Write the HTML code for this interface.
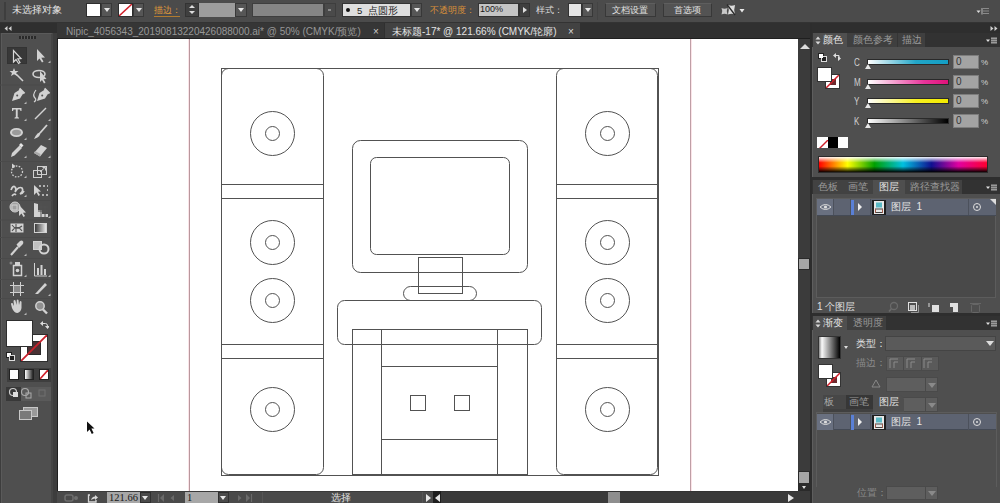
<!DOCTYPE html>
<html><head><meta charset="utf-8">
<style>
*{box-sizing:border-box;margin:0;padding:0}
html,body{width:1000px;height:503px;overflow:hidden;background:#535353;font-family:"Liberation Sans",sans-serif;}
.a{position:absolute}
.t{position:absolute;white-space:nowrap;line-height:1;}
.dd{position:absolute;background:#565656;border:1px solid #383838}
.dd:after{content:"";position:absolute;left:50%;top:50%;margin-left:-3px;margin-top:-2px;border-left:3px solid transparent;border-right:3px solid transparent;border-top:4px solid #e6e6e6}
</style></head><body>

<!-- top control bar -->
<div class="a" style="left:0;top:0;width:1000px;height:23px;background:#4b4b4b;border-bottom:1px solid #333"></div>

<div class="a" style="left:4px;top:2px;width:2px;height:18px;background:#3e3e3e"></div>
<div class="t" style="left:12px;top:5px;font-size:9.5px;color:#e4e4e4">未选择对象</div>

<div class="a" style="left:86px;top:3px;width:15px;height:14px;background:#fff;border:1px solid #2e2e2e"></div>
<div class="dd" style="left:101px;top:3px;width:11px;height:14px"></div>
<div class="a" style="left:118px;top:3px;width:15px;height:14px;background:#fff;border:1px solid #2e2e2e;overflow:hidden">
  <svg width="13" height="12" style="position:absolute;left:0;top:0"><line x1="0" y1="12" x2="13" y2="0" stroke="#d0202a" stroke-width="1.5"/></svg></div>
<div class="dd" style="left:133px;top:3px;width:11px;height:14px"></div>
<div class="t" style="left:154px;top:5.5px;font-size:9px;color:#e09a3c;font-weight:normal">描边：</div>
<div class="a" style="left:154px;top:16px;width:26px;height:1px;background:#b07a30"></div>
<div class="a" style="left:185px;top:3px;width:14px;height:14px;background:#3f3f3f;border:1px solid #333"></div>
<div class="a" style="left:189px;top:5px;width:0;height:0;border-left:3px solid transparent;border-right:3px solid transparent;border-bottom:3px solid #ddd"></div>
<div class="a" style="left:189px;top:11px;width:0;height:0;border-left:3px solid transparent;border-right:3px solid transparent;border-top:3px solid #ddd"></div>
<div class="a" style="left:199px;top:3px;width:36px;height:14px;background:#9c9c9c"></div>
<div class="dd" style="left:235px;top:3px;width:12px;height:14px"></div>
<div class="a" style="left:252px;top:3px;width:72px;height:14px;background:#858585;border:1px solid #3e3e3e"></div>
<div class="a" style="left:324px;top:3px;width:12px;height:14px;background:#4a4a4a;border:1px solid #3e3e3e"></div>
<div class="a" style="left:328px;top:9px;width:3px;height:2px;background:#888"></div>
<div class="a" style="left:342px;top:3px;width:69px;height:14px;background:#dedede;border:1px solid #333"></div>
<div class="a" style="left:346px;top:8px;width:4px;height:4px;border-radius:50%;background:#111"></div>
<div class="t" style="left:357px;top:5.5px;font-size:9.5px;color:#222">5&nbsp;&nbsp;点圆形</div>
<div class="dd" style="left:411px;top:3px;width:11px;height:14px"></div>
<div class="t" style="left:430px;top:5.5px;font-size:9px;color:#d8903a;font-weight:normal">不透明度：</div>
<div class="a" style="left:478px;top:3px;width:41px;height:14px;background:#c4c4c4;border:1px solid #333"></div>
<div class="t" style="left:480px;top:5px;font-size:9px;color:#1a1a1a">100%</div>
<div class="a" style="left:519px;top:3px;width:11px;height:14px;background:#3f3f3f;border:1px solid #333"></div>
<div class="a" style="left:523px;top:7px;border-top:3px solid transparent;border-bottom:3px solid transparent;border-left:4px solid #ddd"></div>
<div class="t" style="left:536px;top:5.5px;font-size:9px;color:#dcdcdc;font-weight:normal">样式：</div>
<div class="a" style="left:568px;top:3px;width:14px;height:14px;background:#e4e4e4;border:1px solid #333"></div>
<div class="dd" style="left:582px;top:3px;width:11px;height:14px"></div>
<div class="a" style="left:597px;top:2px;width:1px;height:18px;background:#444"></div>
<div class="a" style="left:605px;top:3px;width:51px;height:14px;background:#535353;border:1px solid #383838;border-top-color:#5e5e5e"></div>
<div class="t" style="left:612px;top:5.5px;font-size:9px;color:#e0e0e0;font-weight:normal">文档设置</div>
<div class="a" style="left:663px;top:3px;width:49px;height:14px;background:#535353;border:1px solid #383838;border-top-color:#5e5e5e"></div>
<div class="t" style="left:674px;top:5.5px;font-size:9px;color:#e0e0e0;font-weight:normal">首选项</div>
<svg class="a" style="left:720px;top:3px" width="30" height="14"><path d="M1.5 5 Q4.5 6.5 7.5 5 Q6 8 7.5 11.5 Q4.5 10 1.5 11.5 Q3 8 1.5 5 Z" fill="#c8c8c8"/><path d="M8 2 Q11.5 3.5 15 2 Q13.5 6.5 15 11.5 Q11.5 10 8 11.5 Q9.5 6.5 8 2 Z" fill="#dcdcdc"/><path d="M7 1.5 L15 12" stroke="#2a2a2a" stroke-width="1.3"/><path d="M19.5 6 L24.5 6 L22 9.5 Z" fill="#e8e8e8"/></svg>
<svg class="a" style="left:976px;top:7px" width="16" height="10"><path d="M0.5 3.5 L4.5 3.5 L2.5 6 Z" fill="#ddd"/><path d="M7 1.5 H13 M7 4 H13 M7 6.5 H13" stroke="#8a8a8a" stroke-width="1"/><rect x="5.5" y="1" width="1" height="6.5" fill="#bbb"/></svg>

<!-- left toolbar -->
<div class="a" style="left:0;top:23px;width:57px;height:480px;background:#3d3d3d"></div>
<div class="a" style="left:0;top:23px;width:57px;height:10px;background:#2f2f2f"></div>
<svg class="a" style="left:3px;top:25px" width="10" height="7"><path d="M4.5 1 L1.5 3.5 L4.5 6 Z M8.5 1 L5.5 3.5 L8.5 6 Z" fill="#cfcfcf"/></svg>
<div class="a" style="left:1px;top:33px;width:52px;height:470px;background:#4f4f4f;border-right:2px solid #454545;border-left:1px solid #5a5a5a;border-top:1px solid #5a5a5a"></div>
<div class="a" style="left:19px;top:36px;width:17px;height:3px;background:repeating-linear-gradient(90deg,#2a2a2a 0 2px,#5a5a5a 2px 3px)"></div>

<div class="a" style="left:7px;top:47px;width:20px;height:17px;background:#383838;border:1px solid #333"></div>
<svg class="a" style="left:0;top:40px" width="57" height="400">
<g fill="#d2d2d2" stroke="none">
 <!-- selection (hollow) -->
 <path d="M13.5 10.5 L13.5 22 L16 19.5 L18.5 23.5 L20 22.5 L17.8 18.8 L21 18.5 Z" fill="none" stroke="#d8d8d8" stroke-width="1.2"/>
 <!-- direct selection -->
 <path d="M37 9 L37 21 L39.5 18.5 L42 22.5 L43.5 21.5 L41.3 17.8 L45 17.5 Z"/>
 <path d="M50.5 20.5 L50.5 23.0 L48.0 23.0 Z" fill="#b8b8b8"/>
 <!-- magic wand -->
 <path d="M14 28 L15.2 31 L18.5 31 L16 33 L17 36 L14 34.2 L11 36 L12 33 L9.5 31 L12.8 31 Z"/>
 <path d="M16 34 L23 41" stroke="#d2d2d2" stroke-width="1.6"/>
 <!-- lasso -->
 <ellipse cx="39" cy="34" rx="6" ry="3.5" fill="none" stroke="#d2d2d2" stroke-width="1.6"/>
 <path d="M40 31 L40 42 L42 40 L44 43.5 L45.5 42.5 L43.5 39.3 L46.5 39 Z"/>
 <rect x="0" y="44.5" width="52" height="1" fill="#4a4a4a"/>
 <!-- pen -->
 <path d="M12 61 L14.5 53 L20 49.5 L23.5 53 L20 58.5 Z M16 56 L13 60" fill="#d2d2d2"/>
 <path d="M19.5 48.5 L24.5 53.5" stroke="#d2d2d2" stroke-width="2"/>
 <circle cx="17.2" cy="55.5" r="1" fill="#525252"/>
 <path d="M26.5 61.5 L26.5 64.0 L24.0 64.0 Z" fill="#b8b8b8"/>
 <!-- curvature pen -->
 <path d="M37 61 L39.5 53 L45 49.5 L48.5 53 L45 58.5 Z" fill="#d2d2d2"/>
 <path d="M44.5 48.5 L49.5 53.5" stroke="#d2d2d2" stroke-width="2"/>
 <path d="M36 50 Q32 55 35 58 Q37 60 34 62" fill="none" stroke="#d2d2d2" stroke-width="1.2"/>
 <circle cx="42.2" cy="55.5" r="1" fill="#525252"/>
 <!-- type -->
 <path d="M12 68 H21.5 V71 H20.5 L20 69.5 H17.7 V77 L19 77.8 V78.5 H14.5 V77.8 L15.8 77 V69.5 H13.5 L13 71 H12 Z"/>
 <path d="M26.5 78.5 L26.5 81.0 L24.0 81.0 Z" fill="#b8b8b8"/>
 <!-- line -->
 <path d="M35 79 L46 68" stroke="#d2d2d2" stroke-width="1.5"/>
 <path d="M50.5 78.5 L50.5 81.0 L48.0 81.0 Z" fill="#b8b8b8"/>
 <!-- ellipse -->
 <ellipse cx="16.5" cy="92.5" rx="6.5" ry="4.5"/>
 <ellipse cx="16.5" cy="92.5" rx="4.5" ry="2.8" fill="#9a9a9a"/>
 <path d="M26.5 97.5 L26.5 100.0 L24.0 100.0 Z" fill="#b8b8b8"/>
 <!-- paintbrush -->
 <path d="M47 85 L40 93" stroke="#d2d2d2" stroke-width="1.8"/>
 <path d="M40.5 92 Q41 97 34 99 Q36 95 37.5 93.5 Z"/>
 <path d="M50.5 97.5 L50.5 100.0 L48.0 100.0 Z" fill="#b8b8b8"/>
 <!-- pencil -->
 <path d="M11 117 L12 113 L19.5 105.5 L22 108 L14.5 115.5 Z"/>
 <path d="M19 105 L21 103 L23.5 105.5 L21.5 107.5 Z" fill="#e6e6e6"/>
 <path d="M26.5 115.5 L26.5 118.0 L24.0 118.0 Z" fill="#b8b8b8"/>
 <!-- eraser -->
 <path d="M34 113 L41 105 L47 108 L40 116.5 Z"/>
 <path d="M34 113 L40 116.5 L40.5 114 L35 111 Z" fill="#a8a8a8"/>
 <path d="M50.5 115.5 L50.5 118.0 L48.0 118.0 Z" fill="#b8b8b8"/>
 <rect x="0" y="121" width="52" height="1" fill="#4a4a4a"/>
 <!-- rotate -->
 <circle cx="17" cy="131.5" r="5.5" fill="none" stroke="#cfcfcf" stroke-width="1.3" stroke-dasharray="1.6 1.4"/>
 <path d="M12 123.5 L15.5 126 L12 128.5 Z"/>
 <path d="M26.5 135.5 L26.5 138.0 L24.0 138.0 Z" fill="#b8b8b8"/>
 <!-- scale -->
 <rect x="33.5" y="130.5" width="8" height="7" fill="none" stroke="#cfcfcf"/>
 <rect x="37.5" y="126.5" width="9" height="8" fill="none" stroke="#cfcfcf"/>
 <path d="M40 132 L45 127.5 M42.5 127.5 H45.5 V130.5" stroke="#cfcfcf" fill="none"/>
 <path d="M50.5 135.5 L50.5 138.0 L48.0 138.0 Z" fill="#b8b8b8"/>
 <!-- warp -->
 <path d="M11 150 Q13 145 15 147 Q17 149 15 152 Q19 146 22 148 Q24 151 20 154 Q23 153 24 151 M12 156 Q14 153 16 155" fill="none" stroke="#d2d2d2" stroke-width="1.7"/>
 <path d="M26.5 154.5 L26.5 157.0 L24.0 157.0 Z" fill="#b8b8b8"/>
 <!-- free transform -->
 <path d="M34 145 L34 155 L36.5 152.5 L38.5 156 L40 155 L38 151.7 L41 151.5 Z"/>
 <path d="M39 146 H41 M43 146 H45 M47 146 H48 M47 150 H48 M42 155 H44 M46 155 H48" stroke="#d2d2d2" stroke-width="1.5"/>
 <rect x="0" y="160" width="52" height="1" fill="#4a4a4a"/>
 <!-- shape builder -->
 <circle cx="15" cy="167" r="5" fill="#a0a0a0" stroke="#d2d2d2" stroke-width="1"/>
 <rect x="12" y="165" width="5" height="5" fill="none" stroke="#d2d2d2"/>
 <path d="M19 165 L19 176 L21.5 173.5 L23.5 177 L25 176 L23 172.7 L26 172.5 Z"/>
 <!-- perspective grid -->
 <path d="M34 163 V177 H48 V174 H42 V170 H38 V164 Z" fill="#d2d2d2"/>
 <path d="M38 167 H48 M38 171 H48 M41 163 V177 M45 166 V177" stroke="#525252" stroke-width="1"/>
 <path d="M50.5 175.5 L50.5 178.0 L48.0 178.0 Z" fill="#b8b8b8"/>
 <rect x="0" y="179.5" width="52" height="1" fill="#4a4a4a"/>
 <!-- mesh -->
 <rect x="10.5" y="183.5" width="13" height="9" fill="#d2d2d2"/>
 <path d="M12 185 Q16 191 22 186 M12 191 Q17 184 22 191 M16 184 V192" stroke="#525252" stroke-width="1.1" fill="none"/>
 <!-- gradient -->
 <rect x="34.5" y="183.5" width="12" height="9" fill="url(#tg)" stroke="#d2d2d2"/>
 <rect x="0" y="197" width="52" height="1" fill="#4a4a4a"/>
 <!-- eyedropper -->
 <path d="M11 215 L18 207" stroke="#d2d2d2" stroke-width="2"/>
 <path d="M16.5 204.5 L20 201 Q22 200 23 201.5 Q24 203 22.5 204.5 L19 208 Z"/>
 <path d="M26.5 213.5 L26.5 216.0 L24.0 216.0 Z" fill="#b8b8b8"/>
 <!-- blend -->
 <rect x="33.5" y="201.5" width="8" height="8" fill="#c0c0c0" stroke="#d2d2d2"/>
 <circle cx="44" cy="209" r="4.5" fill="none" stroke="#d2d2d2" stroke-width="2"/>
 <rect x="0" y="218" width="52" height="1" fill="#4a4a4a"/>
 <!-- symbol sprayer -->
 <rect x="13.5" y="225.5" width="8" height="10" fill="none" stroke="#d2d2d2" stroke-width="1.5"/>
 <rect x="15" y="222" width="5" height="3"/>
 <circle cx="17.5" cy="230.5" r="1.8"/>
 <circle cx="11" cy="223" r="1.5" fill="#888"/>
 <path d="M26.5 234.5 L26.5 237.0 L24.0 237.0 Z" fill="#b8b8b8"/>
 <!-- column graph -->
 <path d="M34.5 223 V236 H47" fill="none" stroke="#d2d2d2"/>
 <rect x="37" y="228" width="2" height="7"/><rect x="40.5" y="225" width="2" height="10"/><rect x="44" y="229" width="2" height="6"/>
 <path d="M50.5 234.5 L50.5 237.0 L48.0 237.0 Z" fill="#b8b8b8"/>
 <rect x="0" y="239" width="52" height="1" fill="#4a4a4a"/>
 <!-- artboard -->
 <path d="M10 245.5 H24 M10 252.5 H24 M13.5 242 V256 M20.5 242 V256" stroke="#cfcfcf" stroke-width="1"/>
 <rect x="14" y="246" width="6" height="6" fill="#8a8a8a"/>
 <!-- slice -->
 <path d="M35 254 L45 243 L47 245 L38 254 Z"/>
 <path d="M50.5 253.5 L50.5 256.0 L48.0 256.0 Z" fill="#b8b8b8"/>
 <rect x="0" y="258" width="52" height="1" fill="#4a4a4a"/>
 <!-- hand -->
 <path d="M12 268 L11 264 Q11 262.5 12.5 263 L14 266 L13.5 261 Q14 259.5 15.5 260.5 L16.5 265 L16.8 260 Q17.5 259 18.5 260 L19 265 L19.8 261.5 Q21 260.5 21.5 262 L21.5 268 Q21 272 17.5 273 Q14 273 12 268 Z"/>
 <path d="M26.5 272.5 L26.5 275.0 L24.0 275.0 Z" fill="#b8b8b8"/>
 <!-- zoom -->
 <circle cx="40" cy="266" r="4.2" fill="#909090" stroke="#d2d2d2" stroke-width="1.5"/>
 <path d="M43 269.5 L47 273.5" stroke="#d2d2d2" stroke-width="2.4"/>
</g>
<defs><linearGradient id="tg"><stop offset="0" stop-color="#333"/><stop offset="1" stop-color="#eee"/></linearGradient></defs>
</svg>
<!-- fill / stroke -->
<div class="a" style="left:20px;top:334px;width:28px;height:28px;background:#fff;border:1px solid #2e2e2e;overflow:hidden">
 <div class="a" style="left:6px;top:6px;width:14px;height:14px;background:#4a3234;border:1px solid #2a2a2a"></div>
 <svg class="a" style="left:0;top:0" width="26" height="26"><line x1="0" y1="26" x2="26" y2="0" stroke="#c8202c" stroke-width="1.8"/></svg></div>
<div class="a" style="left:6px;top:320px;width:27px;height:27px;background:#fff;border:1px solid #2e2e2e"></div>
<svg class="a" style="left:39px;top:320px" width="10" height="10"><path d="M1 3.5 L4 1 L4 6 Z M8.5 9 L6 6 L11 6 Z" fill="#ddd"/><path d="M3 3.5 H6.5 Q8.5 3.5 8.5 6" fill="none" stroke="#ddd"/></svg>
<svg class="a" style="left:6px;top:352px" width="10" height="10"><rect x="0.5" y="0.5" width="5" height="5" fill="#fff" stroke="#222"/><rect x="3.5" y="3.5" width="5" height="5" fill="#222" stroke="#ddd"/></svg>
<!-- mode buttons -->
<div class="a" style="left:7px;top:368px;width:44px;height:14px;background:#3e3e3e"></div>
<div class="a" style="left:9px;top:369px;width:10px;height:11px;background:#fff;border:1px solid #222"></div>
<div class="a" style="left:24px;top:369px;width:10px;height:11px;background:linear-gradient(90deg,#fff,#222);border:1px solid #222"></div>
<div class="a" style="left:39px;top:369px;width:10px;height:11px;background:#fff;border:1px solid #222;overflow:hidden"><svg width="8" height="9" style="position:absolute;left:0;top:0"><line x1="0" y1="9" x2="8" y2="0" stroke="#d0202a" stroke-width="1.6"/></svg></div>
<!-- draw modes -->
<div class="a" style="left:6px;top:387px;width:45px;height:14px;background:#383838"></div>
<div class="a" style="left:21px;top:387px;width:30px;height:14px;background:#5a5a5a"></div>
<svg class="a" style="left:8px;top:387px" width="44" height="12"><circle cx="5" cy="5" r="3.5" fill="none" stroke="#ccc" stroke-width="1.2"/><rect x="5" y="5" width="5" height="5" fill="#ddd"/><circle cx="17" cy="5" r="3.5" fill="none" stroke="#aaa" stroke-width="1.2"/><rect x="18" y="6" width="5" height="5" fill="none" stroke="#aaa"/><rect x="31" y="3" width="6" height="6" fill="none" stroke="#707070"/></svg>
<!-- screen mode -->
<svg class="a" style="left:18px;top:407px" width="22" height="14"><rect x="5.5" y="0.5" width="14" height="9" fill="#9a9a9a" stroke="#c8c8c8"/><rect x="1.5" y="3.5" width="12" height="9" fill="#7a7a7a" stroke="#c8c8c8"/></svg>


<!-- tab bar -->
<div class="a" style="left:57px;top:23px;width:755px;height:16px;background:#303030;border-bottom:1px solid #1f1f1f"></div>
<div class="a" style="left:57px;top:33px;width:1px;height:458px;background:#1f1f1f"></div>
<div class="a" style="left:57px;top:23px;width:327px;height:15px;background:#363636"></div>
<div class="t" style="left:66px;top:27px;font-size:10px;color:#979797">Nipic_4056343_20190813220426088000.ai* @ 50% (CMYK/<span style="display:inline-block;width:20px">预览</span>)</div>
<div class="t" style="left:373px;top:27px;font-size:10px;color:#ccc">×</div>
<div class="a" style="left:385px;top:23px;width:195px;height:15px;background:#424242"></div>
<div class="t" style="left:392px;top:27px;font-size:10px;color:#e4e4e4"><span style="display:inline-block;width:30px">未标题</span>-17* @ 121.66% (CMYK/<span style="display:inline-block;width:20px">轮廓</span>)</div>
<div class="t" style="left:568px;top:27px;font-size:10px;color:#ddd">×</div>

<!-- canvas -->
<div class="a" style="left:58px;top:39px;width:740px;height:452px;background:#fff;overflow:hidden">
<svg width="740" height="452" style="position:absolute;left:0;top:0">
<g transform="translate(-58,-39)">
  <line x1="188.5" y1="39" x2="188.5" y2="491" stroke="#fbe4e8" stroke-width="1"/><line x1="189.5" y1="39" x2="189.5" y2="491" stroke="#b9979d" stroke-width="1"/>
  <line x1="691.5" y1="39" x2="691.5" y2="491" stroke="#fbe4e8" stroke-width="1"/><line x1="690.5" y1="39" x2="690.5" y2="491" stroke="#bf9fa6" stroke-width="1"/>
  <g fill="none" stroke="#525252" stroke-width="1">
    <rect x="221.5" y="68.5" width="437" height="407"/>
    <rect x="221.5" y="68.5" width="102" height="406" rx="7"/>
    <rect x="556.5" y="68.5" width="101" height="406" rx="7"/>
    <path d="M221.5 184.5H323.5M221.5 198.5H323.5M221.5 344.5H323.5M221.5 358.5H323.5"/>
    <path d="M556.5 184.5H657.5M556.5 198.5H657.5M556.5 344.5H657.5M556.5 358.5H657.5"/>
    <circle cx="272.5" cy="133.5" r="22"/><circle cx="272.5" cy="133.5" r="7"/>
    <circle cx="272.5" cy="242.5" r="22"/><circle cx="272.5" cy="242.5" r="7"/>
    <circle cx="272.5" cy="300.5" r="22"/><circle cx="272.5" cy="300.5" r="7"/>
    <circle cx="272.5" cy="409.5" r="22"/><circle cx="272.5" cy="409.5" r="7"/>
    <circle cx="607.5" cy="133.5" r="22"/><circle cx="607.5" cy="133.5" r="7"/>
    <circle cx="607.5" cy="242.5" r="22"/><circle cx="607.5" cy="242.5" r="7"/>
    <circle cx="607.5" cy="300.5" r="22"/><circle cx="607.5" cy="300.5" r="7"/>
    <circle cx="607.5" cy="409.5" r="22"/><circle cx="607.5" cy="409.5" r="7"/>
    <rect x="352.5" y="140.5" width="175" height="132" rx="8"/>
    <rect x="370.5" y="157.5" width="139" height="97" rx="6"/>
    <rect x="418.5" y="257.5" width="44" height="36"/>
    <rect x="403.5" y="286.5" width="73" height="14" rx="7"/>
    <rect x="337.5" y="300.5" width="204" height="44" rx="7"/>
    <rect x="352.5" y="329.5" width="175" height="145"/>
    <path d="M381.5 329.5V475.5M497.5 329.5V475.5M381.5 366.5H497.5M381.5 439.5H497.5"/>
    <rect x="410.5" y="395.5" width="15" height="15"/>
    <rect x="454.5" y="395.5" width="15" height="15"/>
  </g>
  <!-- cursor -->
  <path d="M87 421.5 L87 432 L89.6 429.6 L91.8 434 L93.6 433 L91.4 428.6 L94.5 428.4 Z" fill="#111"/>
</g>
</svg>
</div>

<!-- vertical scrollbar -->
<div class="a" style="left:798px;top:39px;width:14px;height:452px;background:#3b3b3b"></div>
<div class="a" style="left:800px;top:44px;border-left:5px solid transparent;border-right:5px solid transparent;border-bottom:5px solid #ddd"></div>
<div class="a" style="left:798px;top:258px;width:12px;height:12px;background:#a5a5a5;border:1px solid #2a2a2a"></div>
<div class="a" style="left:798px;top:471px;width:12px;height:13px;background:#a5a5a5;border:1px solid #2a2a2a"></div>
<div class="a" style="left:798px;top:484px;width:13px;height:7px;background:#2a2a2a"></div>
<div class="a" style="left:802px;top:486px;border-left:2.5px solid transparent;border-right:2.5px solid transparent;border-top:3px solid #ddd"></div>

<!-- status bar -->
<div class="a" style="left:57px;top:491px;width:383px;height:12px;background:#4a4a4a;border-top:1px solid #3a3a3a"></div>
<svg class="a" style="left:63px;top:493px" width="40" height="10"><rect x="2" y="2" width="8" height="6" rx="2" fill="none" stroke="#6e6e6e" stroke-width="1.5"/><circle cx="13" cy="5" r="2" fill="#6e6e6e"/><path d="M27 2 H25.5 V9 H33 V7" fill="none" stroke="#d8d8d8" stroke-width="1.3"/><path d="M28 7 Q29 3.5 32 3.5 V2 L35 4.5 L32 7 V5.5 Q30 5.5 28 7 Z" fill="#d8d8d8"/></svg>
<div class="a" style="left:107px;top:492px;width:33px;height:11px;background:#a7a7a7"></div>
<div class="t" style="left:109px;top:492.5px;font-size:10.5px;color:#1a1a1a;font-family:'Liberation Serif',serif">121.66</div>
<div class="a" style="left:140px;top:492px;width:11px;height:11px;background:#4a4a4a;border:1px solid #303030"></div>
<div class="a" style="left:142px;top:496px;border-left:3.5px solid transparent;border-right:3.5px solid transparent;border-top:4px solid #e6e6e6"></div>
<svg class="a" style="left:157px;top:493px" width="22" height="10"><path d="M1.5 1 V9" stroke="#6a6a6a" stroke-width="1.2"/><path d="M7 1 L3 5 L7 9 Z M17 2 L13.5 5 L17 8 Z" fill="#6a6a6a"/></svg>
<div class="a" style="left:185px;top:492px;width:33px;height:11px;background:#a7a7a7"></div>
<div class="t" style="left:187px;top:492.5px;font-size:10.5px;color:#1a1a1a;font-family:'Liberation Serif',serif">1</div>
<div class="a" style="left:218px;top:492px;width:11px;height:11px;background:#4a4a4a;border:1px solid #303030"></div>
<div class="a" style="left:220px;top:496px;border-left:3.5px solid transparent;border-right:3.5px solid transparent;border-top:4px solid #e6e6e6"></div>
<svg class="a" style="left:236px;top:493px" width="22" height="10"><path d="M2 2 L5.5 5 L2 8 Z M10 1 L14 5 L10 9 Z" fill="#6a6a6a"/><path d="M15.5 1 V9" stroke="#6a6a6a" stroke-width="1.2"/></svg>
<div class="a" style="left:262px;top:492px;width:1px;height:11px;background:#555"></div>
<div class="t" style="left:331px;top:493px;font-size:10px;color:#e0e0e0">选择</div>
<div class="a" style="left:422px;top:492px;width:1px;height:11px;background:#555"></div>
<div class="a" style="left:426px;top:494px;border-top:4px solid transparent;border-bottom:4px solid transparent;border-left:5px solid #e6e6e6"></div>
<div class="a" style="left:433px;top:491px;width:8px;height:12px;background:#1e1e1e"></div>
<div class="a" style="left:435px;top:494px;border-top:4px solid transparent;border-bottom:4px solid transparent;border-right:5px solid #e6e6e6"></div>
<div class="a" style="left:441px;top:491px;width:357px;height:12px;background:#3a3a3a;border-top:1px solid #333"></div>
<div class="a" style="left:608px;top:492px;width:12px;height:11px;background:#8e8e8e"></div>
<div class="a" style="left:788px;top:494px;border-top:4px solid transparent;border-bottom:4px solid transparent;border-left:6px solid #e6e6e6"></div>
<div class="a" style="left:798px;top:491px;width:14px;height:12px;background:#3a3a3a"></div>

<!-- right dock -->
<div class="a" style="left:810px;top:23px;width:190px;height:480px;background:#2d2d2d"></div>
<div class="a" style="left:812px;top:23px;width:188px;height:10px;background:#2e2e2e"></div>
<svg class="a" style="left:989px;top:25px" width="10" height="7"><path d="M1.5 1 L4.5 3.5 L1.5 6 Z M5.5 1 L8.5 3.5 L5.5 6 Z" fill="#cfcfcf"/></svg>

<!-- color panel -->
<div class="a" style="left:812px;top:33px;width:188px;height:145px;background:#4f4f4f;border-left:1px solid #5e5e5e"></div>
<div class="a" style="left:812px;top:33px;width:188px;height:14px;background:#323232"></div>
<div class="a" style="left:847px;top:33px;width:78px;height:14px;background:#3f3f3f"></div>
<div class="a" style="left:813px;top:33px;width:34px;height:14px;background:#4f4f4f"></div>
<svg class="a" style="left:815px;top:36px" width="6" height="9"><path d="M0.5 3.5 L3 0.5 L5.5 3.5 Z M0.5 5.5 L3 8.5 L5.5 5.5 Z" fill="#d8d8d8"/></svg>
<div class="t" style="left:823px;top:35px;font-size:10px;color:#e6e6e6">颜色</div>
<div class="t" style="left:853px;top:35px;font-size:10px;color:#9a9a9a">颜色参考</div>
<div class="t" style="left:902px;top:35px;font-size:10px;color:#9a9a9a">描边</div>
<div class="a" style="left:897px;top:33px;width:1px;height:14px;background:#353535"></div>
<svg class="a" style="left:986px;top:36px" width="12" height="9"><path d="M0 3.5 L4 3.5 L2 6 Z" fill="#e0e0e0"/><rect x="5" y="1" width="6" height="7" fill="#6a6a6a"/><path d="M5 2.5 H11 M5 4.5 H11 M5 6.5 H11" stroke="#9a9a9a" stroke-width="1"/></svg>

<svg class="a" style="left:818px;top:53px" width="10" height="10"><rect x="0.5" y="0.5" width="5" height="5" fill="#fff" stroke="#222"/><rect x="3.5" y="3.5" width="5" height="5" fill="#222" stroke="#ddd" stroke-width="1"/><rect x="1" y="1" width="4" height="4" fill="#fff"/></svg>
<svg class="a" style="left:832px;top:52px" width="10" height="10"><path d="M1 3.5 L4 1 L4 6 Z M9 6.5 L6 9 L6 4 Z" fill="#ddd"/><path d="M3 3.5 H7 V6" fill="none" stroke="#ddd"/></svg>
<div class="a" style="left:825px;top:74px;width:15px;height:15px;background:#fff;border:1px solid #333;overflow:hidden">
 <div class="a" style="left:4px;top:4px;width:6px;height:6px;background:#6e2a2e"></div>
 <svg class="a" style="left:0;top:0" width="13" height="13"><line x1="0" y1="13" x2="13" y2="0" stroke="#d0202a" stroke-width="1.5"/></svg></div>
<div class="a" style="left:817px;top:67px;width:15px;height:15px;background:#fff;border:1px solid #333"></div>
<div class="t" style="left:854px;top:58px;font-size:10px;color:#cfcfcf;transform:scaleX(0.8);transform-origin:left">C</div>
<div class="a" style="left:867px;top:59px;width:82px;height:6px;background:linear-gradient(90deg,#fff,#22a6c8 60%,#139ec4);border:1px solid #2a2a2a"></div>
<div class="a" style="left:865px;top:64px;width:0;height:0;border-left:3px solid transparent;border-right:3px solid transparent;border-bottom:5px solid #e6e6e6"></div>
<div class="a" style="left:953px;top:55px;width:26px;height:14px;background:#a3a3a3;border:1px solid #7d7d7d"></div>
<div class="t" style="left:956px;top:57px;font-size:10px;color:#333">0</div>
<div class="t" style="left:981px;top:59px;font-size:8px;color:#d0d0d0">%</div>
<div class="t" style="left:854px;top:78px;font-size:10px;color:#cfcfcf;transform:scaleX(0.8);transform-origin:left">M</div>
<div class="a" style="left:867px;top:79px;width:82px;height:6px;background:linear-gradient(90deg,#fff,#e8349a 70%,#e0127a);border:1px solid #2a2a2a"></div>
<div class="a" style="left:865px;top:84px;width:0;height:0;border-left:3px solid transparent;border-right:3px solid transparent;border-bottom:5px solid #e6e6e6"></div>
<div class="a" style="left:953px;top:75px;width:26px;height:14px;background:#a3a3a3;border:1px solid #7d7d7d"></div>
<div class="t" style="left:956px;top:77px;font-size:10px;color:#333">0</div>
<div class="t" style="left:981px;top:79px;font-size:8px;color:#d0d0d0">%</div>
<div class="t" style="left:854px;top:97px;font-size:10px;color:#cfcfcf;transform:scaleX(0.8);transform-origin:left">Y</div>
<div class="a" style="left:867px;top:98px;width:82px;height:6px;background:linear-gradient(90deg,#fff,#f7f020 60%,#f2ea00);border:1px solid #2a2a2a"></div>
<div class="a" style="left:865px;top:103px;width:0;height:0;border-left:3px solid transparent;border-right:3px solid transparent;border-bottom:5px solid #e6e6e6"></div>
<div class="a" style="left:953px;top:94px;width:26px;height:14px;background:#a3a3a3;border:1px solid #7d7d7d"></div>
<div class="t" style="left:956px;top:96px;font-size:10px;color:#333">0</div>
<div class="t" style="left:981px;top:98px;font-size:8px;color:#d0d0d0">%</div>
<div class="t" style="left:854px;top:117px;font-size:10px;color:#cfcfcf;transform:scaleX(0.8);transform-origin:left">K</div>
<div class="a" style="left:867px;top:118px;width:82px;height:6px;background:linear-gradient(90deg,#fff,#555 65%,#000);border:1px solid #2a2a2a"></div>
<div class="a" style="left:865px;top:123px;width:0;height:0;border-left:3px solid transparent;border-right:3px solid transparent;border-bottom:5px solid #e6e6e6"></div>
<div class="a" style="left:953px;top:114px;width:26px;height:14px;background:#a3a3a3;border:1px solid #7d7d7d"></div>
<div class="t" style="left:956px;top:116px;font-size:10px;color:#333">0</div>
<div class="t" style="left:981px;top:118px;font-size:8px;color:#d0d0d0">%</div>

<div class="a" style="left:817px;top:137px;width:11px;height:11px;background:#fff;overflow:hidden"><svg width="11" height="11"><line x1="0" y1="11" x2="11" y2="0" stroke="#d0202a" stroke-width="1.4"/></svg></div>
<div class="a" style="left:828px;top:137px;width:10px;height:11px;background:#000"></div>
<div class="a" style="left:838px;top:137px;width:10px;height:11px;background:#fff"></div>
<div class="a" style="left:818px;top:156px;width:170px;height:17px;border:1px solid #2b2b2b;background:linear-gradient(90deg,#ff0000 0%,#ffff00 17%,#00a000 33%,#00c0e0 50%,#101090 67%,#e000a0 83%,#ff0030 100%)"></div>
<div class="a" style="left:819px;top:157px;width:168px;height:15px;background:linear-gradient(180deg,rgba(255,255,255,.95) 0%,rgba(255,255,255,0) 38%,rgba(0,0,0,0) 62%,rgba(0,0,0,.95) 100%)"></div>
<div class="a" style="left:812px;top:177px;width:188px;height:3px;background:#2e2e2e"></div>

<!-- layers panel -->
<div class="a" style="left:812px;top:180px;width:188px;height:134px;background:#4f4f4f;border-left:1px solid #5e5e5e"></div>
<div class="a" style="left:812px;top:180px;width:188px;height:14px;background:#323232"></div>
<div class="a" style="left:813px;top:180px;width:60px;height:14px;background:#424242"></div>
<div class="a" style="left:905px;top:180px;width:57px;height:14px;background:#424242"></div>
<div class="a" style="left:873px;top:180px;width:32px;height:14px;background:#4f4f4f"></div>
<div class="t" style="left:818px;top:182px;font-size:10px;color:#9a9a9a">色板</div>
<div class="t" style="left:848px;top:182px;font-size:10px;color:#9a9a9a">画笔</div>
<div class="t" style="left:879px;top:182px;font-size:10px;color:#e6e6e6">图层</div>
<div class="t" style="left:910px;top:182px;font-size:10px;color:#9a9a9a">路径查找器</div>
<svg class="a" style="left:986px;top:183px" width="12" height="9"><path d="M0 3.5 L4 3.5 L2 6 Z" fill="#e0e0e0"/><rect x="5" y="1" width="6" height="7" fill="#6a6a6a"/><path d="M5 2.5 H11 M5 4.5 H11 M5 6.5 H11" stroke="#9a9a9a" stroke-width="1"/></svg>
<div class="a" style="left:816px;top:198px;width:180px;height:100px;background:#494949;border:1px solid #5c5c5c"></div>
<div class="a" style="left:817px;top:199px;width:179px;height:17px;background:#5d6371;border-bottom:1px solid #444a55"></div>
<div class="a" style="left:817px;top:199px;width:16px;height:16px;background:#697080"></div>
<div class="a" style="left:833px;top:199px;width:1px;height:16px;background:#4c515c"></div>
<div class="a" style="left:850px;top:199px;width:1px;height:16px;background:#4c515c"></div>
<div class="a" style="left:851px;top:200px;width:3px;height:15px;background:#5a80d6"></div>
<svg class="a" style="left:819px;top:202px" width="13" height="10"><path d="M1 5 Q6.5 0 12 5 Q6.5 10 1 5 Z" fill="none" stroke="#ddd" stroke-width="1"/><circle cx="6.5" cy="5" r="1.6" fill="#ddd"/></svg>
<div class="a" style="left:858px;top:203px;border-top:4px solid transparent;border-bottom:4px solid transparent;border-left:4px solid #eee"></div>
<div class="a" style="left:870px;top:199px;width:1px;height:16px;background:#4c515c"></div>
<svg class="a" style="left:872px;top:200px" width="14" height="15"><rect x="0" y="0" width="14" height="15" fill="#1e1e1e"/><rect x="2" y="1" width="10" height="13" fill="#e8e8e8"/><rect x="4" y="2.5" width="6" height="5" fill="#5ab8c4"/><rect x="3" y="8.5" width="8" height="1" fill="#444"/><rect x="3" y="12" width="8" height="1" fill="#444"/><rect x="3" y="9" width="1" height="4" fill="#a05a4a"/><rect x="10" y="9" width="1" height="4" fill="#a05a4a"/></svg>
<div class="t" style="left:891px;top:202px;font-size:10px;color:#e6e6e6"><span style="display:inline-block;width:20px">图层</span>&nbsp;&nbsp;1</div>
<div class="a" style="left:968px;top:199px;width:1px;height:16px;background:#4c515c"></div>
<svg class="a" style="left:972px;top:202px" width="10" height="10"><circle cx="5" cy="5" r="3.5" fill="none" stroke="#ddd"/><circle cx="5" cy="5" r="1" fill="#ddd"/></svg>
<div class="a" style="left:990px;top:199px;border-left:6px solid transparent;border-top:6px solid #ddd"></div>
<div class="t" style="left:817px;top:302px;font-size:10px;color:#e0e0e0">1 个图层</div>
<svg class="a" style="left:886px;top:301px" width="110" height="13">
 <circle cx="8" cy="5" r="3.5" fill="none" stroke="#6a6a6a" stroke-width="1.3"/><line x1="5.5" y1="7.5" x2="3" y2="10.5" stroke="#6a6a6a" stroke-width="1.5"/>
 <rect x="22.5" y="1.5" width="8" height="8" fill="none" stroke="#e0e0e0"/><rect x="24" y="4" width="5" height="5" fill="#bbb"/><path d="M25 11.5 H32.5 V4" fill="none" stroke="#999"/>
 <path d="M42 3 L44 3 M42 5 L44 5" stroke="#ddd"/><rect x="46" y="4" width="7" height="7" fill="#e0e0e0"/>
 <path d="M64 2 H72 V11 H67 V6 H64 Z" fill="#e0e0e0"/>
 <rect x="85.5" y="3.5" width="8" height="8" rx="1" fill="none" stroke="#666"/><path d="M84 2.5 H95" stroke="#666"/>
</svg>
<div class="a" style="left:812px;top:313px;width:188px;height:3px;background:#2e2e2e"></div>

<!-- gradient panel -->
<div class="a" style="left:812px;top:316px;width:188px;height:187px;background:#4f4f4f;border-left:1px solid #5e5e5e"></div>
<div class="a" style="left:812px;top:316px;width:188px;height:14px;background:#323232"></div>
<div class="a" style="left:847px;top:316px;width:39px;height:14px;background:#3f3f3f"></div>
<div class="a" style="left:813px;top:316px;width:34px;height:14px;background:#4f4f4f"></div>
<svg class="a" style="left:815px;top:319px" width="6" height="9"><path d="M0.5 3.5 L3 0.5 L5.5 3.5 Z M0.5 5.5 L3 8.5 L5.5 5.5 Z" fill="#d8d8d8"/></svg>
<div class="t" style="left:823px;top:318px;font-size:10px;color:#e6e6e6">渐变</div>
<div class="t" style="left:853px;top:318px;font-size:10px;color:#9a9a9a">透明度</div>
<svg class="a" style="left:986px;top:319px" width="12" height="9"><path d="M0 3.5 L4 3.5 L2 6 Z" fill="#e0e0e0"/><rect x="5" y="1" width="6" height="7" fill="#6a6a6a"/><path d="M5 2.5 H11 M5 4.5 H11 M5 6.5 H11" stroke="#9a9a9a" stroke-width="1"/></svg>
<div class="a" style="left:818px;top:336px;width:23px;height:23px;border:1px solid #333;background:linear-gradient(90deg,#888 0%,#fafafa 14%,#000 100%)"></div>
<div class="a" style="left:844px;top:346px;border-left:2px solid transparent;border-right:2px solid transparent;border-top:3px solid #ddd"></div>
<div class="t" style="left:856px;top:339px;font-size:10px;color:#e0e0e0">类型：</div>
<div class="a" style="left:885px;top:336px;width:111px;height:15px;background:#5a5a5a;border:1px solid #444"></div>
<div class="a" style="left:986px;top:341px;border-left:4px solid transparent;border-right:4px solid transparent;border-top:5px solid #ddd"></div>
<div class="t" style="left:856px;top:358px;font-size:10px;color:#8a8a8a">描边：</div>
<div class="a" style="left:886px;top:356px;width:53px;height:15px;background:#5a5a5a;border:1px solid #4a4a4a"></div>
<svg class="a" style="left:886px;top:356px" width="53" height="15"><path d="M4 3 H12 M4 3 V12 M8 6 H12 M8 6 V12 M21 3 H29 M21 3 V12 M25 6 H29 M25 6 V12 M38 3 H46 M38 3 V12 M42 6 H46 M42 6 V12" stroke="#8a8a8a" fill="none"/><path d="M17.5 1 V14 M35.5 1 V14" stroke="#4a4a4a"/></svg>
<div class="a" style="left:826px;top:372px;width:15px;height:15px;background:#fff;border:1px solid #333;overflow:hidden">
 <div class="a" style="left:4px;top:4px;width:6px;height:6px;background:#6e2a2e"></div>
 <svg class="a" style="left:0;top:0" width="13" height="13"><line x1="0" y1="13" x2="13" y2="0" stroke="#d0202a" stroke-width="1.5"/></svg></div>
<div class="a" style="left:818px;top:364px;width:15px;height:15px;background:#fff;border:1px solid #333"></div>
<svg class="a" style="left:871px;top:379px" width="10" height="9"><path d="M5 1 L9 8 H1 Z" fill="none" stroke="#888"/></svg>
<div class="a" style="left:886px;top:377px;width:52px;height:15px;background:#5e5e5e;border:1px solid #4a4a4a"></div>
<div class="a" style="left:925px;top:378px;width:1px;height:13px;background:#4a4a4a"></div>
<div class="a" style="left:928px;top:383px;border-left:4px solid transparent;border-right:4px solid transparent;border-top:5px solid #8a8a8a"></div>
<div class="a" style="left:886px;top:397px;width:52px;height:15px;background:#5e5e5e;border:1px solid #4a4a4a"></div>
<div class="a" style="left:925px;top:398px;width:1px;height:13px;background:#4a4a4a"></div>
<div class="a" style="left:928px;top:403px;border-left:4px solid transparent;border-right:4px solid transparent;border-top:5px solid #8a8a8a"></div>
<!-- drag ghost -->
<div class="a" style="left:823px;top:395px;width:23px;height:14px;background:#474747"></div>
<div class="a" style="left:846px;top:395px;width:27px;height:14px;background:#373737"></div>
<div class="a" style="left:873px;top:395px;width:31px;height:18px;background:#4f4f4f;border-top-right-radius:5px"></div>
<div class="a" style="left:823px;top:409px;width:50px;height:4px;background:#404040"></div>
<div class="t" style="left:824px;top:397px;font-size:10px;color:#aaa">板</div>
<div class="t" style="left:849px;top:397px;font-size:10px;color:#999">画笔</div>
<div class="t" style="left:879px;top:397px;font-size:10px;color:#e6e6e6">图层</div>
<div class="a" style="left:816px;top:412px;width:181px;height:75px;border:1px solid #5c5c5c;border-bottom:none"></div>
<div class="a" style="left:817px;top:414px;width:179px;height:16px;background:#5d6371;border-bottom:1px solid #444a55"></div>
<div class="a" style="left:817px;top:414px;width:16px;height:16px;background:#697080"></div>
<div class="a" style="left:833px;top:414px;width:1px;height:16px;background:#4c515c"></div>
<div class="a" style="left:850px;top:414px;width:1px;height:16px;background:#4c515c"></div>
<div class="a" style="left:851px;top:415px;width:3px;height:15px;background:#5a80d6"></div>
<svg class="a" style="left:819px;top:417px" width="13" height="10"><path d="M1 5 Q6.5 0 12 5 Q6.5 10 1 5 Z" fill="none" stroke="#ddd" stroke-width="1"/><circle cx="6.5" cy="5" r="1.6" fill="#ddd"/></svg>
<div class="a" style="left:858px;top:418px;border-top:4px solid transparent;border-bottom:4px solid transparent;border-left:4px solid #eee"></div>
<div class="a" style="left:870px;top:414px;width:1px;height:16px;background:#4c515c"></div>
<svg class="a" style="left:872px;top:415px" width="14" height="15"><rect x="0" y="0" width="14" height="15" fill="#1e1e1e"/><rect x="2" y="1" width="10" height="13" fill="#e8e8e8"/><rect x="4" y="2.5" width="6" height="5" fill="#5ab8c4"/><rect x="3" y="8.5" width="8" height="1" fill="#444"/><rect x="3" y="12" width="8" height="1" fill="#444"/><rect x="3" y="9" width="1" height="4" fill="#a05a4a"/><rect x="10" y="9" width="1" height="4" fill="#a05a4a"/></svg>
<div class="t" style="left:891px;top:417px;font-size:10px;color:#e6e6e6"><span style="display:inline-block;width:20px">图层</span>&nbsp;&nbsp;1</div>
<div class="a" style="left:968px;top:414px;width:1px;height:16px;background:#4c515c"></div>
<svg class="a" style="left:972px;top:417px" width="10" height="10"><circle cx="5" cy="5" r="3.5" fill="none" stroke="#ddd"/><circle cx="5" cy="5" r="1" fill="#ddd"/></svg>
<div class="t" style="left:857px;top:488px;font-size:10px;color:#8a8a8a">位置：</div>
<div class="a" style="left:886px;top:486px;width:52px;height:14px;background:#5e5e5e;border:1px solid #4a4a4a"></div>
<div class="a" style="left:925px;top:487px;width:1px;height:12px;background:#4a4a4a"></div>
<div class="a" style="left:928px;top:491px;border-left:4px solid transparent;border-right:4px solid transparent;border-top:5px solid #8a8a8a"></div>
</body></html>
